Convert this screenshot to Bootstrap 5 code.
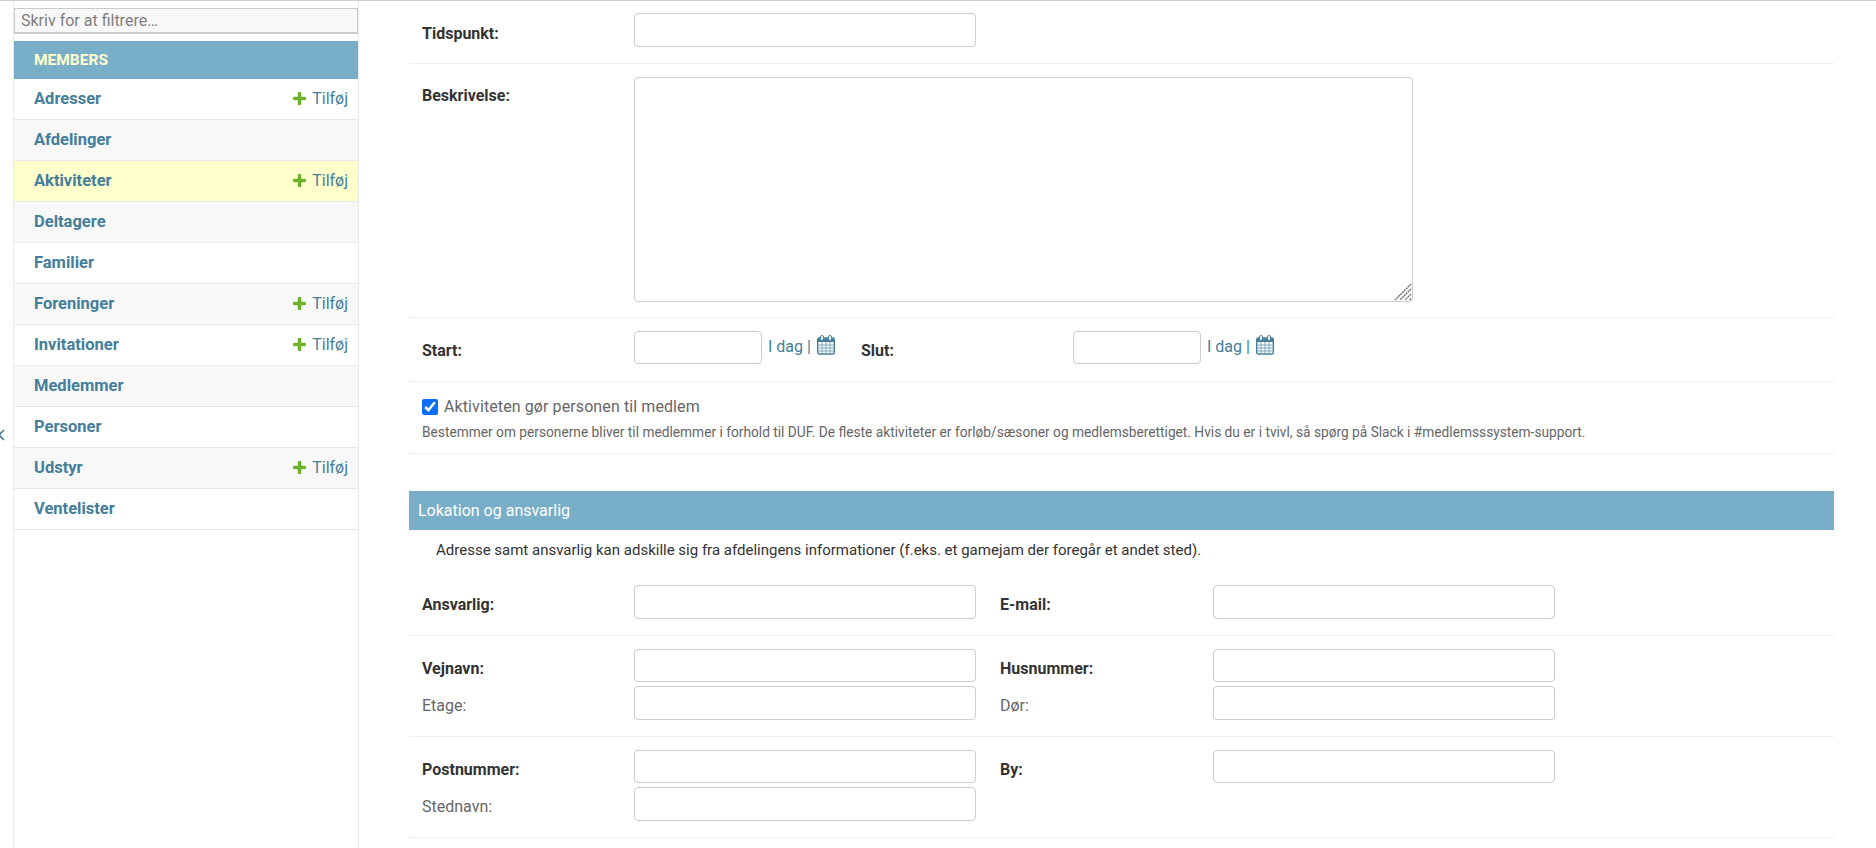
<!DOCTYPE html>
<html lang="da">
<head>
<meta charset="utf-8">
<title>Aktiviteter</title>
<link href="https://cdn.jsdelivr.net/npm/bootstrap@5.3.0/dist/css/bootstrap.min.css" rel="stylesheet">
<style>
html,body{height:848px;overflow:hidden;}
body{font-family:Roboto,"Liberation Sans",sans-serif;font-size:16px;line-height:1.3;color:#333;background:#fff;border-top:1px solid #ccc;position:relative;}
a{color:#447e9b;text-decoration:none;}
.shell{height:847px;}
.side-nav{width:346px;margin-left:13px;border-left:1px solid #eaeaea;border-right:1px solid #eaeaea;flex:none;padding-top:7px;}
.side-filter{display:block;width:100%;height:26px;padding:2px 6px;margin-bottom:7px;background:#f8f8f8;border:1px solid #ccc;border-width:1px 1px 2px 1px;font-size:16px;color:#333;outline:0;font-family:inherit;}
.side-filter::placeholder{color:#808080;opacity:1;}
.side-head{height:38px;background:#79aec8;color:#ffc;font-weight:700;font-size:15.5px;padding-left:20px;line-height:38px;text-transform:uppercase;}
.side-row{height:41px;padding:0 10px 0 20px;border-bottom:1px solid #e8e8e8;font-weight:700;font-size:16.5px;}
.side-row.alt{background:#f8f8f8;}
.side-row.cur{background:#ffc;}
.side-add{font-weight:400;font-size:16px;color:#447e9b;}
.side-add svg{margin-right:6px;vertical-align:-1px;}
.side-toggle{position:absolute;left:-4px;top:425px;line-height:1;}
.main-pane{flex:1;padding:0 42px 0 50px;min-width:0;}
.frow{border-bottom:1px solid #eee;padding-left:13px;}
.flabel{flex:none;width:212px;font-size:16px;color:#666;padding-top:8px;}
.flabel.req{font-weight:700;color:#333;}
.pair + .pair .flabel{width:213px;}
.txt{display:block;height:34px;width:342px;border:1px solid #ccc;border-radius:4px;background:#fff;flex:none;padding:5px 6px;outline:0;}
.txt.dt{width:128px;height:33px;}
.txt.short{height:33px;}
.area-wrap{width:779px;height:225px;flex:none;}
.txtarea{display:block;width:100%;height:100%;border:1px solid #ccc;border-radius:4px;background:#fff;padding:5px 6px;outline:0;resize:none;}
.grip{position:absolute;right:1px;bottom:1px;pointer-events:none;}
.pair{width:554px;flex:none;}
.stack{gap:4px;}
.dlinks{margin-left:6px;font-size:16px;color:#447e9b;line-height:1;padding-bottom:6px;white-space:nowrap;}
.dlinks svg{vertical-align:-3px;margin-left:2px;}
.r-tid{padding-top:12px;padding-bottom:16px;}
.r-besk{padding-top:13px;padding-bottom:15px;}
.r-besk .flabel{padding-top:9px;}
.r-date{padding-top:13px;padding-bottom:17px;}
.r-check{padding-top:15px;padding-bottom:11px;}
.chk{width:16px;height:16px;margin:0 6px 0 0;accent-color:#0d6efd;flex:none;}
.chk-label{font-size:16px;color:#666;letter-spacing:.1px;}
.helptext{font-size:13.72px;color:#666;margin-top:6px;}
.fs-head{margin-top:37px;height:39px;line-height:39px;background:#79aec8;color:#fff;font-size:16px;padding-left:9px;margin-bottom:0;}
.fs-desc{padding:11px 0 0 27px;height:55px;font-size:15px;color:#333;}
.r-a{padding-top:0;padding-bottom:16px;}
.r-b{padding-top:13px;padding-bottom:16px;}
.gap24{gap:24px;}
</style>
</head>
<body>
<div class="shell d-flex">
  <nav class="side-nav">
    <input class="side-filter" type="text" placeholder="Skriv for at filtrere…" aria-label="Filter">
    <div class="side-head">Members</div>
    <div class="side-row d-flex align-items-center justify-content-between"><a href="#">Adresser</a><a class="side-add" href="#"><svg width="13" height="13" viewBox="0 0 13 13"><path d="M6.5 1.500v10M1.500 6.500h10" stroke="#6eb22c" stroke-width="3.500" stroke-linecap="round"/></svg>Tilføj</a></div>
    <div class="side-row alt d-flex align-items-center"><a href="#">Afdelinger</a></div>
    <div class="side-row cur d-flex align-items-center justify-content-between"><a href="#">Aktiviteter</a><a class="side-add" href="#"><svg width="13" height="13" viewBox="0 0 13 13"><path d="M6.5 1.500v10M1.500 6.500h10" stroke="#6eb22c" stroke-width="3.500" stroke-linecap="round"/></svg>Tilføj</a></div>
    <div class="side-row alt d-flex align-items-center"><a href="#">Deltagere</a></div>
    <div class="side-row d-flex align-items-center"><a href="#">Familier</a></div>
    <div class="side-row alt d-flex align-items-center justify-content-between"><a href="#">Foreninger</a><a class="side-add" href="#"><svg width="13" height="13" viewBox="0 0 13 13"><path d="M6.5 1.500v10M1.500 6.500h10" stroke="#6eb22c" stroke-width="3.500" stroke-linecap="round"/></svg>Tilføj</a></div>
    <div class="side-row d-flex align-items-center justify-content-between"><a href="#">Invitationer</a><a class="side-add" href="#"><svg width="13" height="13" viewBox="0 0 13 13"><path d="M6.5 1.500v10M1.500 6.500h10" stroke="#6eb22c" stroke-width="3.500" stroke-linecap="round"/></svg>Tilføj</a></div>
    <div class="side-row alt d-flex align-items-center"><a href="#">Medlemmer</a></div>
    <div class="side-row d-flex align-items-center"><a href="#">Personer</a></div>
    <div class="side-row alt d-flex align-items-center justify-content-between"><a href="#">Udstyr</a><a class="side-add" href="#"><svg width="13" height="13" viewBox="0 0 13 13"><path d="M6.5 1.500v10M1.500 6.500h10" stroke="#6eb22c" stroke-width="3.500" stroke-linecap="round"/></svg>Tilføj</a></div>
    <div class="side-row d-flex align-items-center"><a href="#">Ventelister</a></div>
  </nav>
  <main class="main-pane">
    <div class="frow r-tid d-flex align-items-center"><div class="flabel req">Tidspunkt:</div><input class="txt" type="text" aria-label="Tidspunkt"></div>
    <div class="frow r-besk d-flex"><div class="flabel req">Beskrivelse:</div><div class="area-wrap position-relative"><textarea class="txtarea" aria-label="Beskrivelse"></textarea><svg class="grip" width="18" height="18" viewBox="0 0 18 18"><path d="M17 1 1 17M17 6 6 17M17 11 11 17M17 15.500 15.500 17" stroke="#777" stroke-width="1.500" stroke-dasharray="2 .6"/></svg></div></div>
    <div class="frow r-date d-flex align-items-center">
      <div class="d-flex align-items-center" style="width:439px">
        <div class="flabel req">Start:</div><input class="txt dt" type="text" aria-label="Start">
        <span class="dlinks"><a href="#">I dag</a> | <a href="#"><svg width="18" height="20" viewBox="0 0 18 20"><rect x=".7" y="3" width="16.6" height="16" rx="1.500" fill="#fff" stroke="#447e9b" stroke-width="1.400"/><path d="M1 3.500h16V7H1z" fill="#447e9b"/><path d="M1 10h16M1 13h16M1 16h16M5 7v12M9 7v12M13 7v12" stroke="#7aa5ba" stroke-width="1"/><rect x="3.500" y=".5" width="3" height="5" rx="1.500" fill="#fff" stroke="#447e9b"/><rect x="11.500" y=".5" width="3" height="5" rx="1.500" fill="#fff" stroke="#447e9b"/></svg></a></span>
      </div>
      <div class="d-flex align-items-center">
        <div class="flabel req">Slut:</div><input class="txt dt" type="text" aria-label="Slut">
        <span class="dlinks"><a href="#">I dag</a> | <a href="#"><svg width="18" height="20" viewBox="0 0 18 20"><rect x=".7" y="3" width="16.6" height="16" rx="1.500" fill="#fff" stroke="#447e9b" stroke-width="1.400"/><path d="M1 3.500h16V7H1z" fill="#447e9b"/><path d="M1 10h16M1 13h16M1 16h16M5 7v12M9 7v12M13 7v12" stroke="#7aa5ba" stroke-width="1"/><rect x="3.500" y=".5" width="3" height="5" rx="1.500" fill="#fff" stroke="#447e9b"/><rect x="11.500" y=".5" width="3" height="5" rx="1.500" fill="#fff" stroke="#447e9b"/></svg></a></span>
      </div>
    </div>
    <div class="frow r-check">
      <label class="d-flex align-items-center"><input class="chk" type="checkbox" checked><span class="chk-label">Aktiviteten gør personen til medlem</span></label>
      <div class="helptext">Bestemmer om personerne bliver til medlemmer i forhold til DUF. De fleste aktiviteter er forløb/sæsoner og medlemsberettiget. Hvis du er i tvivl, så spørg på Slack i #medlemsssystem-support.</div>
    </div>
    <h2 class="fs-head fw-normal">Lokation og ansvarlig</h2>
    <div class="fs-desc">Adresse samt ansvarlig kan adskille sig fra afdelingens informationer (f.eks. et gamejam der foregår et andet sted).</div>
    <div class="frow r-a d-flex gap24">
      <div class="pair d-flex align-items-center"><div class="flabel req">Ansvarlig:</div><input class="txt" type="text" aria-label="Ansvarlig"></div>
      <div class="pair d-flex align-items-center"><div class="flabel req">E-mail:</div><input class="txt" type="text" aria-label="E-mail"></div>
    </div>
    <div class="frow r-b d-flex gap24">
      <div class="pair d-flex flex-column stack">
        <div class="d-flex align-items-center"><div class="flabel req">Vejnavn:</div><input class="txt short" type="text" aria-label="Vejnavn"></div>
        <div class="d-flex align-items-center"><div class="flabel">Etage:</div><input class="txt" type="text" aria-label="Etage"></div>
      </div>
      <div class="pair d-flex flex-column stack">
        <div class="d-flex align-items-center"><div class="flabel req">Husnummer:</div><input class="txt short" type="text" aria-label="Husnummer"></div>
        <div class="d-flex align-items-center"><div class="flabel">Dør:</div><input class="txt" type="text" aria-label="Dør"></div>
      </div>
    </div>
    <div class="frow r-b d-flex gap24">
      <div class="pair d-flex flex-column stack">
        <div class="d-flex align-items-center"><div class="flabel req">Postnummer:</div><input class="txt short" type="text" aria-label="Postnummer"></div>
        <div class="d-flex align-items-center"><div class="flabel">Stednavn:</div><input class="txt" type="text" aria-label="Stednavn"></div>
      </div>
      <div class="pair d-flex align-items-start"><div class="d-flex align-items-center"><div class="flabel req">By:</div><input class="txt short" type="text" aria-label="By"></div></div>
    </div>
  </main>
</div>
<a class="side-toggle" href="#" aria-label="Skjul"><svg width="9" height="14" viewBox="0 0 9 14"><path d="M8 2 3 7l5 5" fill="none" stroke="#447e9b" stroke-width="1.600"/></svg></a>
<script src="https://cdn.jsdelivr.net/npm/bootstrap@5.3.0/dist/js/bootstrap.bundle.min.js"></script>
</body>
</html>
